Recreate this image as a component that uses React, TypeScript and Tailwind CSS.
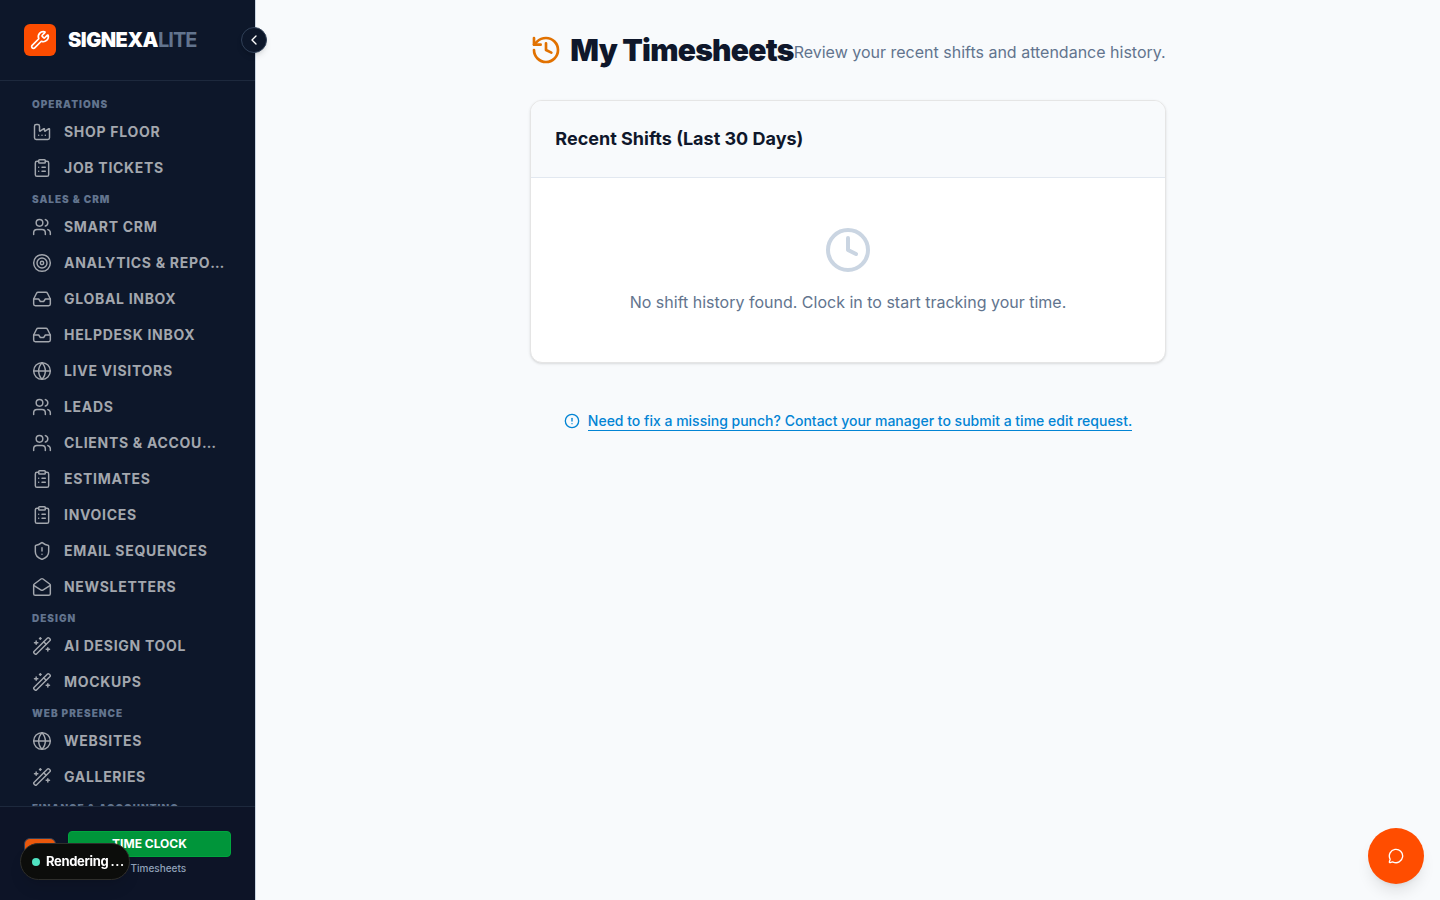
import {
  ChevronLeft,
  CircleAlert,
  ClipboardList,
  Clock,
  Factory,
  Globe,
  History,
  Inbox,
  MailOpen,
  MessageCircle,
  ShieldAlert,
  Target,
  Users,
  WandSparkles,
  Wrench,
  type LucideIcon,
} from "lucide-react";

interface NavItem {
  label: string;
  icon: LucideIcon;
}

interface NavSection {
  title: string;
  items: NavItem[];
}

const sections: NavSection[] = [
  {
    title: "Operations",
    items: [
      { label: "Shop Floor", icon: Factory },
      { label: "Job Tickets", icon: ClipboardList },
    ],
  },
  {
    title: "Sales & CRM",
    items: [
      { label: "Smart CRM", icon: Users },
      { label: "Analytics & Reports", icon: Target },
      { label: "Global Inbox", icon: Inbox },
      { label: "Helpdesk Inbox", icon: Inbox },
      { label: "Live Visitors", icon: Globe },
      { label: "Leads", icon: Users },
      { label: "Clients & Accounts", icon: Users },
      { label: "Estimates", icon: ClipboardList },
      { label: "Invoices", icon: ClipboardList },
      { label: "Email Sequences", icon: ShieldAlert },
      { label: "Newsletters", icon: MailOpen },
    ],
  },
  {
    title: "Design",
    items: [
      { label: "AI Design Tool", icon: WandSparkles },
      { label: "Mockups", icon: WandSparkles },
    ],
  },
  {
    title: "Web Presence",
    items: [
      { label: "Websites", icon: Globe },
      { label: "Galleries", icon: WandSparkles },
    ],
  },
  { title: "Finance & Accounting", items: [] },
];

function Sidebar() {
  return (
    <aside className="relative z-10 flex h-full w-64 shrink-0 flex-col border-r border-slate-300 bg-[#0d172a]">
      {/* logo */}
      <div className="flex shrink-0 items-center gap-3 border-b border-slate-800 p-6">
        <div className="flex size-8 items-center justify-center rounded-md bg-[#fc4c00] text-white">
          <Wrench className="size-5" />
        </div>
        <span className="text-xl font-black tracking-tight text-white">
          SIGNEXA<span className="font-bold tracking-tighter text-slate-500">LITE</span>
        </span>
      </div>

      {/* collapse */}
      <button
        type="button"
        aria-label="Collapse sidebar"
        className="absolute top-[27px] -right-3 flex size-[26px] items-center justify-center rounded-full border border-slate-700 bg-[#0d172a] text-white shadow-md">
        <ChevronLeft className="size-4" />
      </button>

      {/* links */}
      <nav className="min-h-0 flex-1 overflow-hidden px-4 pt-2.5">
        {sections.map((section) => (
          <div key={section.title}>
            <h2 className="px-4 pt-1.5 pb-0.5 text-[10px] leading-[15px] font-black tracking-widest text-slate-500 uppercase">
              {section.title}
            </h2>
            {section.items.map(({ label, icon: Icon }) => (
              <a
                key={label}
                href="#"
                className="flex h-9 items-center gap-3 pr-3 pl-4 text-sm font-bold tracking-wider text-[#a3a7ae] uppercase">
                <Icon className="size-5 shrink-0" strokeWidth={1.75} />
                <span className="truncate">{label}</span>
              </a>
            ))}
          </div>
        ))}
      </nav>

      {/* time clock */}
      <div className="flex shrink-0 items-center gap-3 border-t border-slate-800 bg-[#0d1427] p-6">
        <div className="size-8 rounded-md border border-slate-700 bg-[#ea580c]" />
        <div className="flex flex-1 flex-col items-center gap-1">
          <button
            type="button"
            className="h-[26px] w-full rounded-sm border border-[#00a63e] bg-[#00953a] text-xs font-bold text-white">
            TIME CLOCK
          </button>
          <a href="#" className="text-[10px] leading-[15px] font-medium text-slate-400">
            My Timesheets
          </a>
        </div>
      </div>
    </aside>
  );
}

function Timesheets() {
  return (
    <main className="min-w-0 flex-1 overflow-auto p-8">
      <div className="mx-auto w-fit">
        <header className="flex items-center justify-between">
          <h1 className="flex items-center gap-2 text-3xl font-black tracking-tight text-slate-900">
            <History className="size-8 text-[#e17100]" />
            My Timesheets
          </h1>
          <p className="pt-1 text-slate-500">Review your recent shifts and attendance history.</p>
        </header>

        <section className="mt-8 overflow-hidden rounded-xl border border-neutral-200 bg-white shadow-sm">
          <div className="border-b border-slate-200 bg-slate-50 p-6">
            <h2 className="text-lg font-bold text-slate-900">Recent Shifts (Last 30 Days)</h2>
          </div>
          <div className="flex flex-col items-center gap-4 p-12">
            <Clock className="size-12 text-slate-300" />
            <p className="text-slate-500">No shift history found. Clock in to start tracking your time.</p>
          </div>
        </section>

        <div className="mt-12 flex h-5 items-center justify-center gap-2 text-sm font-medium text-[#0284d4]">
          <CircleAlert className="size-4" />
          <a href="#" className="border-b border-[#0284d4] leading-[19px]">
            Need to fix a missing punch? Contact your manager to submit a time edit request.
          </a>
        </div>
      </div>
    </main>
  );
}

export default function App() {
  return (
    <div className="flex h-screen overflow-hidden bg-slate-50 font-['Inter',sans-serif]">
      <Sidebar />
      <Timesheets />

      <button
        type="button"
        aria-label="Open chat"
        className="fixed right-4 bottom-4 flex size-14 items-center justify-center rounded-full bg-[#ff4d00] text-white shadow-lg">
        <MessageCircle className="size-4" />
      </button>

      {/* build status */}
      <div
        role="status"
        className="fixed bottom-5 left-5 z-20 flex h-[37px] w-[110px] items-center gap-1.5 rounded-full border border-[#2e2e2b] bg-[#0c0d0b] pl-[11px] text-[13px] font-semibold text-white shadow-lg">
        <span className="size-2 rounded-full bg-[#50e3c2]" />
        <span className="flex gap-0.5">
          <span className="font-bold tracking-tight">Rendering</span>
          <span className="tracking-wider">...</span>
        </span>
      </div>
    </div>
  );
}
